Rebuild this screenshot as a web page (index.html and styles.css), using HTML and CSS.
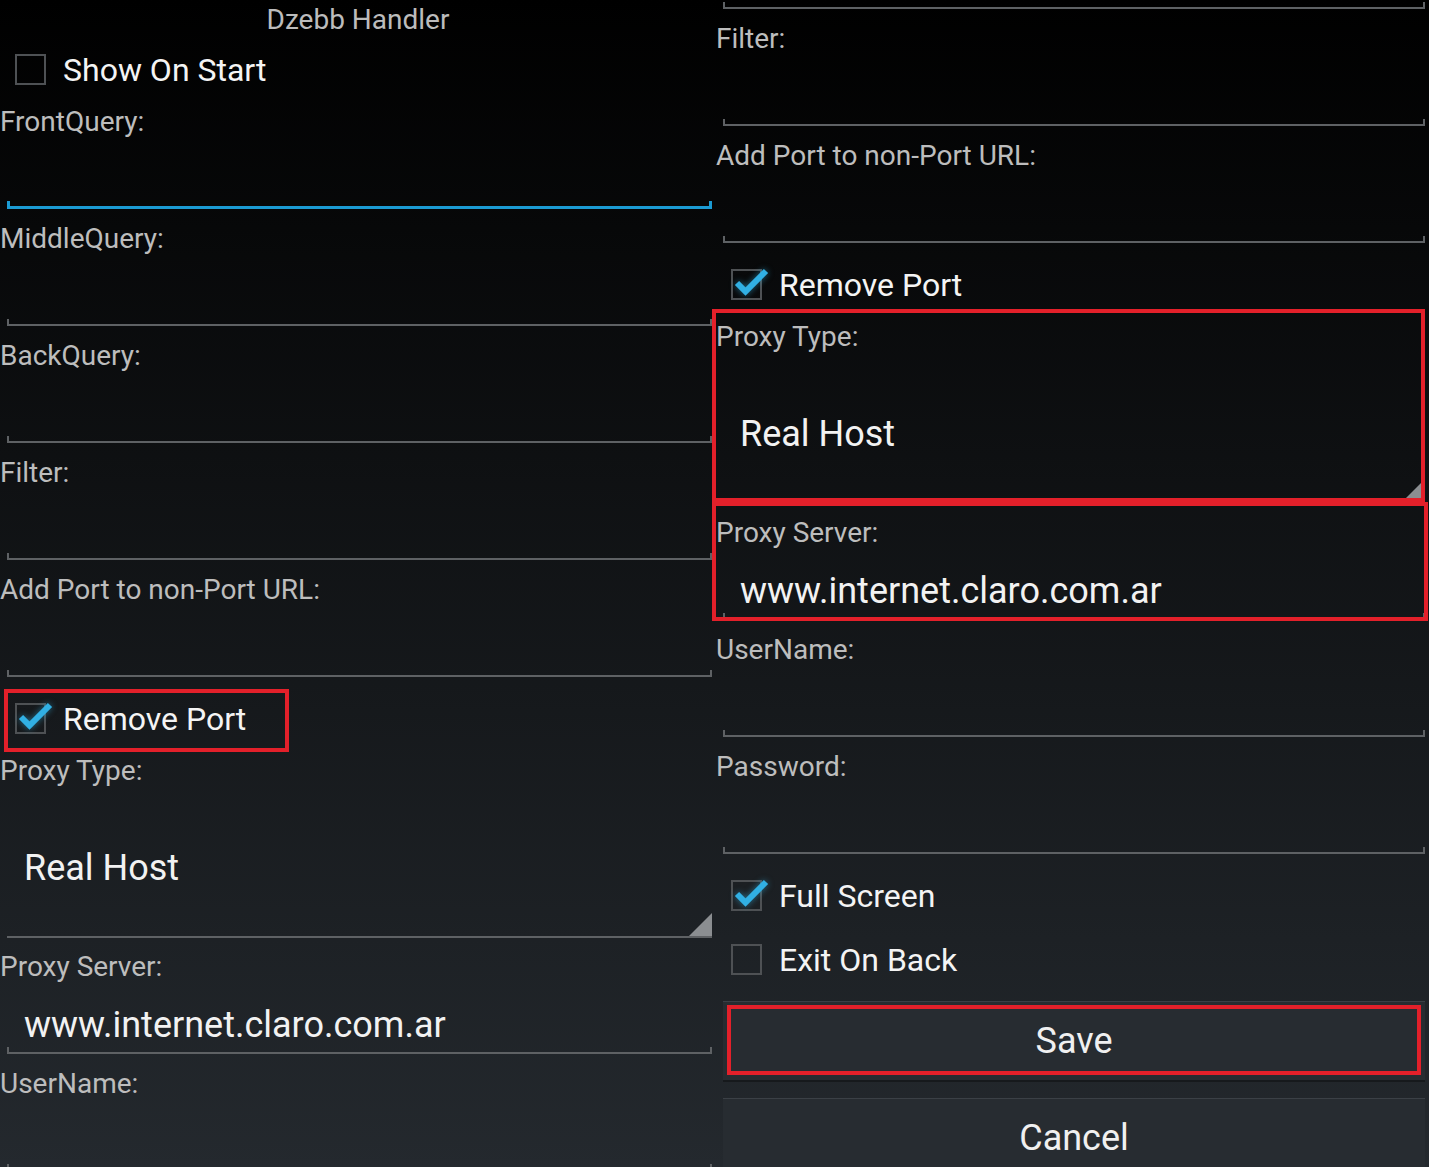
FILE: index.html
```html
<!DOCTYPE html>
<html lang="en">
<head>
    <meta charset="UTF-8">
    <meta name="viewport" content="width=device-width, initial-scale=1.0">
    <title>Dzebb Handler</title>
    <link rel="stylesheet" href="styles.css">
</head>
<body>
    <div class="screens">
        <!-- first screenshot: top of the settings form -->
        <div class="screen">
            <div class="title">Dzebb Handler</div>
            <div class="check-row">
                <span class="box"></span>
                <span>Show On Start</span>
            </div>
            <div class="field">
                <div class="label">FrontQuery:</div>
                <div class="edit focused"></div>
            </div>
            <div class="field">
                <div class="label">MiddleQuery:</div>
                <div class="edit"></div>
            </div>
            <div class="field">
                <div class="label">BackQuery:</div>
                <div class="edit"></div>
            </div>
            <div class="field">
                <div class="label">Filter:</div>
                <div class="edit"></div>
            </div>
            <div class="field">
                <div class="label">Add Port to non-Port URL:</div>
                <div class="edit"></div>
            </div>
            <div class="check-row hl hl-port">
                <span class="box">
                    <svg viewBox="0 0 40 32"><path d="M6 14 L14.5 22.5 L35 2"/></svg>
                </span>
                <span>Remove Port</span>
            </div>
            <div class="field">
                <div class="label">Proxy Type:</div>
                <div class="spinner">Real Host</div>
            </div>
            <div class="field">
                <div class="label">Proxy Server:</div>
                <div class="edit">www.internet.claro.com.ar</div>
            </div>
            <div class="field">
                <div class="label">UserName:</div>
                <div class="edit"></div>
            </div>
        </div>

        <!-- second screenshot: same form scrolled down -->
        <div class="screen">
            <div class="edit tail"></div>
            <div class="field">
                <div class="label">Filter:</div>
                <div class="edit"></div>
            </div>
            <div class="field">
                <div class="label">Add Port to non-Port URL:</div>
                <div class="edit"></div>
            </div>
            <div class="check-row">
                <span class="box">
                    <svg viewBox="0 0 40 32"><path d="M6 14 L14.5 22.5 L35 2"/></svg>
                </span>
                <span>Remove Port</span>
            </div>
            <div class="field hl hl-type">
                <div class="label">Proxy Type:</div>
                <div class="spinner">Real Host</div>
            </div>
            <div class="field hl hl-server">
                <div class="label">Proxy Server:</div>
                <div class="edit">www.internet.claro.com.ar</div>
            </div>
            <div class="field">
                <div class="label">UserName:</div>
                <div class="edit"></div>
            </div>
            <div class="field">
                <div class="label">Password:</div>
                <div class="edit"></div>
            </div>
            <div class="check-row">
                <span class="box">
                    <svg viewBox="0 0 40 32"><path d="M6 14 L14.5 22.5 L35 2"/></svg>
                </span>
                <span>Full Screen</span>
            </div>
            <div class="check-row">
                <span class="box"></span>
                <span>Exit On Back</span>
            </div>
            <div class="actions">
                <button class="btn hl hl-save">Save</button>
                <button class="btn">Cancel</button>
            </div>
        </div>
    </div>
</body>
</html>
```

FILE: styles.css
```css
*,
*::before,
*::after {
    box-sizing: border-box;
    margin: 0;
    padding: 0;
}

body {
    font-family: Roboto, 'Noto Sans', sans-serif;
    background-color: #000;
    color: #f2f2f2;
}

.screens {
    display: grid;
    grid-template-columns: 716px 713px;
    align-items: start;
    height: 1167px;
    overflow: hidden;
    background: linear-gradient(180deg, #000 0%, #24292e 100%);
}

.screen {
    position: relative;
}

.title {
    height: 39px;
    line-height: 39px;
    text-align: center;
    font-size: 28px;
    color: #bcbcbc;
}

.check-row {
    display: flex;
    align-items: center;
    height: 64px;
    padding: 0 0 3px 15px;
    font-size: 32px;
    color: #f4f4f4;
}

.box {
    position: relative;
    flex-shrink: 0;
    width: 31px;
    height: 31px;
    margin-right: 17px;
    border: 2px solid #4e5154;
}

.box svg {
    position: absolute;
    left: -2px;
    top: -2px;
    width: 40px;
    height: 32px;
    overflow: visible;
    filter: drop-shadow(0 0 3px rgba(51, 181, 229, 0.55));
}

.box path {
    fill: none;
    stroke: #31b0e4;
    stroke-width: 6;
}

.field {
    display: flow-root;
}

.label {
    height: 38px;
    line-height: 38px;
    font-size: 28px;
    color: #bdbdbd;
    white-space: nowrap;
}

.edit {
    position: relative;
    height: 68px;
    margin: 0 4px 11px 7px;
    padding: 19px 0 0 17px;
    border-bottom: 2px solid #5e6164;
    font-size: 36px;
    line-height: 40px;
    color: #f2f2f2;
}

.edit::before,
.edit::after {
    content: '';
    position: absolute;
    bottom: 0;
    width: 2px;
    height: 5px;
    background-color: #5e6164;
}

.edit::before {
    left: 0;
}

.edit::after {
    right: 0;
}

.edit.focused {
    border-bottom: 3px solid #1b9bd3;
}

.edit.focused::before,
.edit.focused::after {
    width: 3px;
    background-color: #1b9bd3;
}

.edit.tail {
    height: 9px;
    padding: 0;
}

.spinner {
    position: relative;
    height: 148px;
    margin: 0 4px 10px 7px;
    padding: 53px 0 0 17px;
    border-bottom: 2px solid #5e6164;
    font-size: 36px;
    line-height: 50px;
    color: #f2f2f2;
}

.spinner::after {
    content: '';
    position: absolute;
    right: 0;
    bottom: 0;
    border-left: 23px solid transparent;
    border-bottom: 23px solid #8b8e91;
}

.actions {
    display: flex;
    flex-direction: column;
    gap: 16px;
    padding: 8px 4px 0 7px;
}

.btn {
    height: 81px;
    background-color: #272c31;
    border: none;
    border-top: 1px solid #3b4046;
    border-bottom: 2px solid #16191c;
    color: #f0f0f0;
    font-family: Roboto, 'Noto Sans', sans-serif;
    font-size: 36px;
}

/* red annotation frames drawn over the screenshots */
.hl {
    position: relative;
}

.hl::after {
    content: '';
    position: absolute;
    border: 4px solid #e3202a;
    pointer-events: none;
}

.hl-port::after {
    top: 1px;
    bottom: 0;
    left: 4px;
    width: 285px;
}

.hl-type::after {
    top: -9px;
    bottom: 12px;
    left: -4px;
    right: 4px;
}

.hl-server::after {
    top: -12px;
    bottom: 10px;
    left: -4px;
    right: 1px;
}

.hl-save::after {
    top: 3px;
    bottom: 5px;
    left: 4px;
    right: 4px;
}
```
